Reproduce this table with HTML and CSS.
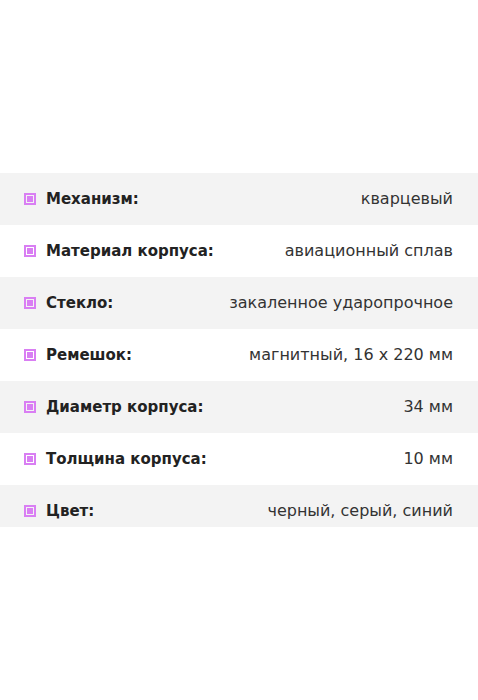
FILE: index.html
```html
<!DOCTYPE html>
<html lang="ru">
<head>
<meta charset="utf-8">
<link rel="stylesheet" href="styles.css">
</head>
<body>
<div class="specs">
  <div class="row"><div class="label"><span class="mark"></span>Механизм:</div><div class="value">кварцевый</div></div>
  <div class="row"><div class="label"><span class="mark"></span>Материал корпуса:</div><div class="value">авиационный сплав</div></div>
  <div class="row"><div class="label"><span class="mark"></span>Стекло:</div><div class="value">закаленное ударопрочное</div></div>
  <div class="row"><div class="label"><span class="mark"></span>Ремешок:</div><div class="value">магнитный, 16 х 220 мм</div></div>
  <div class="row"><div class="label"><span class="mark"></span>Диаметр корпуса:</div><div class="value">34 мм</div></div>
  <div class="row"><div class="label"><span class="mark"></span>Толщина корпуса:</div><div class="value">10 мм</div></div>
  <div class="row"><div class="label"><span class="mark"></span>Цвет:</div><div class="value">черный, серый, синий</div></div>
</div>
</body>
</html>
```
FILE: styles.css
```css
html, body {
  margin: 0;
  padding: 0;
  background: #ffffff;
}
body {
  font-family: "DejaVu Sans", "Open Sans", sans-serif;
  color: #2a2a2a;
}
.specs {
  margin-top: 173px;
  height: 354px;
  overflow: hidden;
}
.row {
  height: 52px;
  display: flex;
  align-items: baseline;
  justify-content: space-between;
  padding: 16px 25px 0 24px;
  box-sizing: border-box;
  line-height: 20px;
}
.row:nth-child(odd) {
  background: #f3f3f3;
}
.label {
  font-weight: bold;
  font-size: 15px;
  color: #222222;
  white-space: nowrap;
}
.mark {
  display: inline-block;
  width: 12px;
  height: 12px;
  border: 2px solid #d97ef3;
  padding: 1px;
  box-sizing: border-box;
  margin-right: 10px;
  background: #d97ef3;
  background-clip: content-box;
  vertical-align: -1px;
}
.value {
  font-size: 16px;
  color: #333333;
  white-space: nowrap;
}
```
